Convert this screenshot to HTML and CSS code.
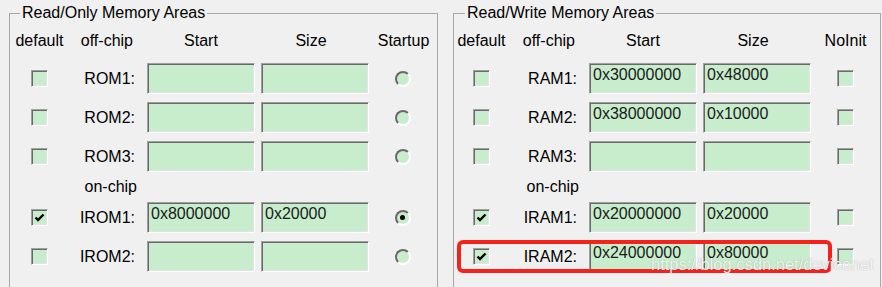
FILE: index.html
```html
<!DOCTYPE html>
<html lang="en">
<head>
<meta charset="UTF-8" />
<title>Memory Areas</title>
<link rel="stylesheet" href="styles.css">
</head>
<body>
  <div class="window">
    <fieldset class="group group-ro">
      <legend>Read/Only Memory Areas</legend>
      <div class="grid">
        <div class="hd">default</div>
        <div class="hd hd-label">off-chip</div>
        <div class="hd">Start</div>
        <div class="hd hd-size">Size</div>
        <div class="hd">Startup</div>

        <div class="cell check-cell"><span class="chk"></span></div>
        <div class="cell name">ROM1:</div>
        <div class="field"></div>
        <div class="field"></div>
        <div class="cell"><span class="radio"></span></div>

        <div class="cell check-cell"><span class="chk"></span></div>
        <div class="cell name">ROM2:</div>
        <div class="field"></div>
        <div class="field"></div>
        <div class="cell"><span class="radio"></span></div>

        <div class="cell check-cell"><span class="chk"></span></div>
        <div class="cell name">ROM3:</div>
        <div class="field"></div>
        <div class="field"></div>
        <div class="cell"><span class="radio"></span></div>

        <div class="cell name sub">on-chip</div>

        <div class="cell check-cell"><span class="chk on"><svg viewBox="0 0 13 13" width="13" height="13"><path d="M2.5 6.5 L5 9 L10.5 3.5" fill="none" stroke="#000" stroke-width="2.4"/></svg></span></div>
        <div class="cell name">IROM1:</div>
        <div class="field">0x8000000</div>
        <div class="field">0x20000</div>
        <div class="cell"><span class="radio on"></span></div>

        <div class="cell check-cell"><span class="chk"></span></div>
        <div class="cell name">IROM2:</div>
        <div class="field"></div>
        <div class="field"></div>
        <div class="cell"><span class="radio"></span></div>
      </div>
    </fieldset>

    <fieldset class="group group-rw">
      <legend>Read/Write Memory Areas</legend>
      <div class="grid">
        <div class="hd">default</div>
        <div class="hd hd-label">off-chip</div>
        <div class="hd">Start</div>
        <div class="hd hd-size">Size</div>
        <div class="hd">NoInit</div>

        <div class="cell check-cell"><span class="chk"></span></div>
        <div class="cell name">RAM1:</div>
        <div class="field">0x30000000</div>
        <div class="field">0x48000</div>
        <div class="cell"><span class="chk"></span></div>

        <div class="cell check-cell"><span class="chk"></span></div>
        <div class="cell name">RAM2:</div>
        <div class="field">0x38000000</div>
        <div class="field">0x10000</div>
        <div class="cell"><span class="chk"></span></div>

        <div class="cell check-cell"><span class="chk"></span></div>
        <div class="cell name">RAM3:</div>
        <div class="field"></div>
        <div class="field"></div>
        <div class="cell"><span class="chk"></span></div>

        <div class="cell name sub">on-chip</div>

        <div class="cell check-cell"><span class="chk on"><svg viewBox="0 0 13 13" width="13" height="13"><path d="M2.5 6.5 L5 9 L10.5 3.5" fill="none" stroke="#000" stroke-width="2.4"/></svg></span></div>
        <div class="cell name">IRAM1:</div>
        <div class="field">0x20000000</div>
        <div class="field">0x20000</div>
        <div class="cell"><span class="chk"></span></div>

        <div class="cell check-cell"><span class="chk on"><svg viewBox="0 0 13 13" width="13" height="13"><path d="M2.5 6.5 L5 9 L10.5 3.5" fill="none" stroke="#000" stroke-width="2.4"/></svg></span></div>
        <div class="cell name">IRAM2:</div>
        <div class="field">0x24000000</div>
        <div class="field">0x80000</div>
        <div class="cell"><span class="chk"></span></div>
      </div>
    </fieldset>
  </div>

  <!-- annotation drawn over the dialog -->
  <div class="mark"></div>
  <div class="watermark">https://blog.csdn.net/devicenet</div>
</body>
</html>
```

FILE: styles.css
```css
/* Base */
* {
  box-sizing: border-box;
}
html {
  overflow: hidden;
}
body {
  margin: 0;
  background: #f0f0f0;
  font-family: 'Liberation Sans', Arial, sans-serif;
  font-size: 16px;
  color: #000;
  overflow: hidden;
  height: 287px;
  position: relative;
}
.window {
  display: flex;
  gap: 15px;
  padding-left: 9px;
}
/* Group boxes */
.group {
  margin: 4px 0 0 0;
  width: 429px;
  height: 300px;
  border: 1px solid #a7a7a7;
  padding: 5px 5px 0 5px;
}
.group legend {
  margin-left: 5px;
  padding: 0 2px;
  line-height: 18px;
}
.group-rw {
  width: 428px;
  padding-left: 3px;
}
.group-rw legend {
  margin-left: 8px;
}
.grid {
  display: grid;
  grid-template-columns: 49px 71px 108px 108px 57px;
  grid-template-rows: 28px 31px 31px 31px 14px 31px 31px;
  column-gap: 6px;
  row-gap: 8px;
}
/* Headers and labels */
.hd {
  display: flex;
  align-items: center;
  justify-content: center;
  white-space: nowrap;
}
.hd-label {
  justify-content: flex-end;
  padding-right: 8px;
}
.hd-size {
  padding-right: 8px;
}
.cell {
  display: flex;
  align-items: center;
  justify-content: center;
}
.check-cell {
  grid-column: 1;
}
.name {
  justify-content: flex-end;
  padding-right: 6px;
  white-space: nowrap;
}
.sub {
  grid-column: 2;
  padding-right: 4px;
}
/* Edit boxes */
.field {
  background: #c7edcc;
  border: 1px solid;
  border-color: #a0a0a0 #fff #fff #a0a0a0;
  box-shadow: inset 1px 1px 0 #696969, inset -1px -1px 0 #e3e3e3;
  padding: 2px 0 0 3px;
  line-height: 18px;
  color: #1b1b1b;
}
/* Check boxes */
.chk {
  width: 17px;
  height: 17px;
  background: #c7edcc;
  border: 1px solid;
  border-color: #a0a0a0 #fff #fff #a0a0a0;
  box-shadow: inset 1px 1px 0 #696969, inset -1px -1px 0 #e3e3e3;
  display: flex;
  align-items: center;
  justify-content: center;
}
.chk svg {
  display: block;
}
/* Radio buttons */
.radio {
  width: 16px;
  height: 16px;
  border-radius: 50%;
  background: #c7edcc;
  border: 2px solid;
  border-color: #6a6a6a #fff #fff #6a6a6a;
  margin-left: -2px;
  display: flex;
  align-items: center;
  justify-content: center;
}
.radio.on::after {
  content: '';
  width: 5px;
  height: 5px;
  border-radius: 50%;
  background: #000;
}
/* Annotation */
.mark {
  position: absolute;
  left: 457px;
  top: 240px;
  width: 375px;
  height: 33px;
  border: 4px solid #f5221b;
  border-radius: 6px;
}
.watermark {
  position: absolute;
  left: 651px;
  top: 255px;
  font-size: 16.5px;
  color: rgba(255, 255, 255, 0.9);
  text-shadow: 0 0 1px rgba(80, 80, 80, 0.5);
  white-space: nowrap;
}
```
